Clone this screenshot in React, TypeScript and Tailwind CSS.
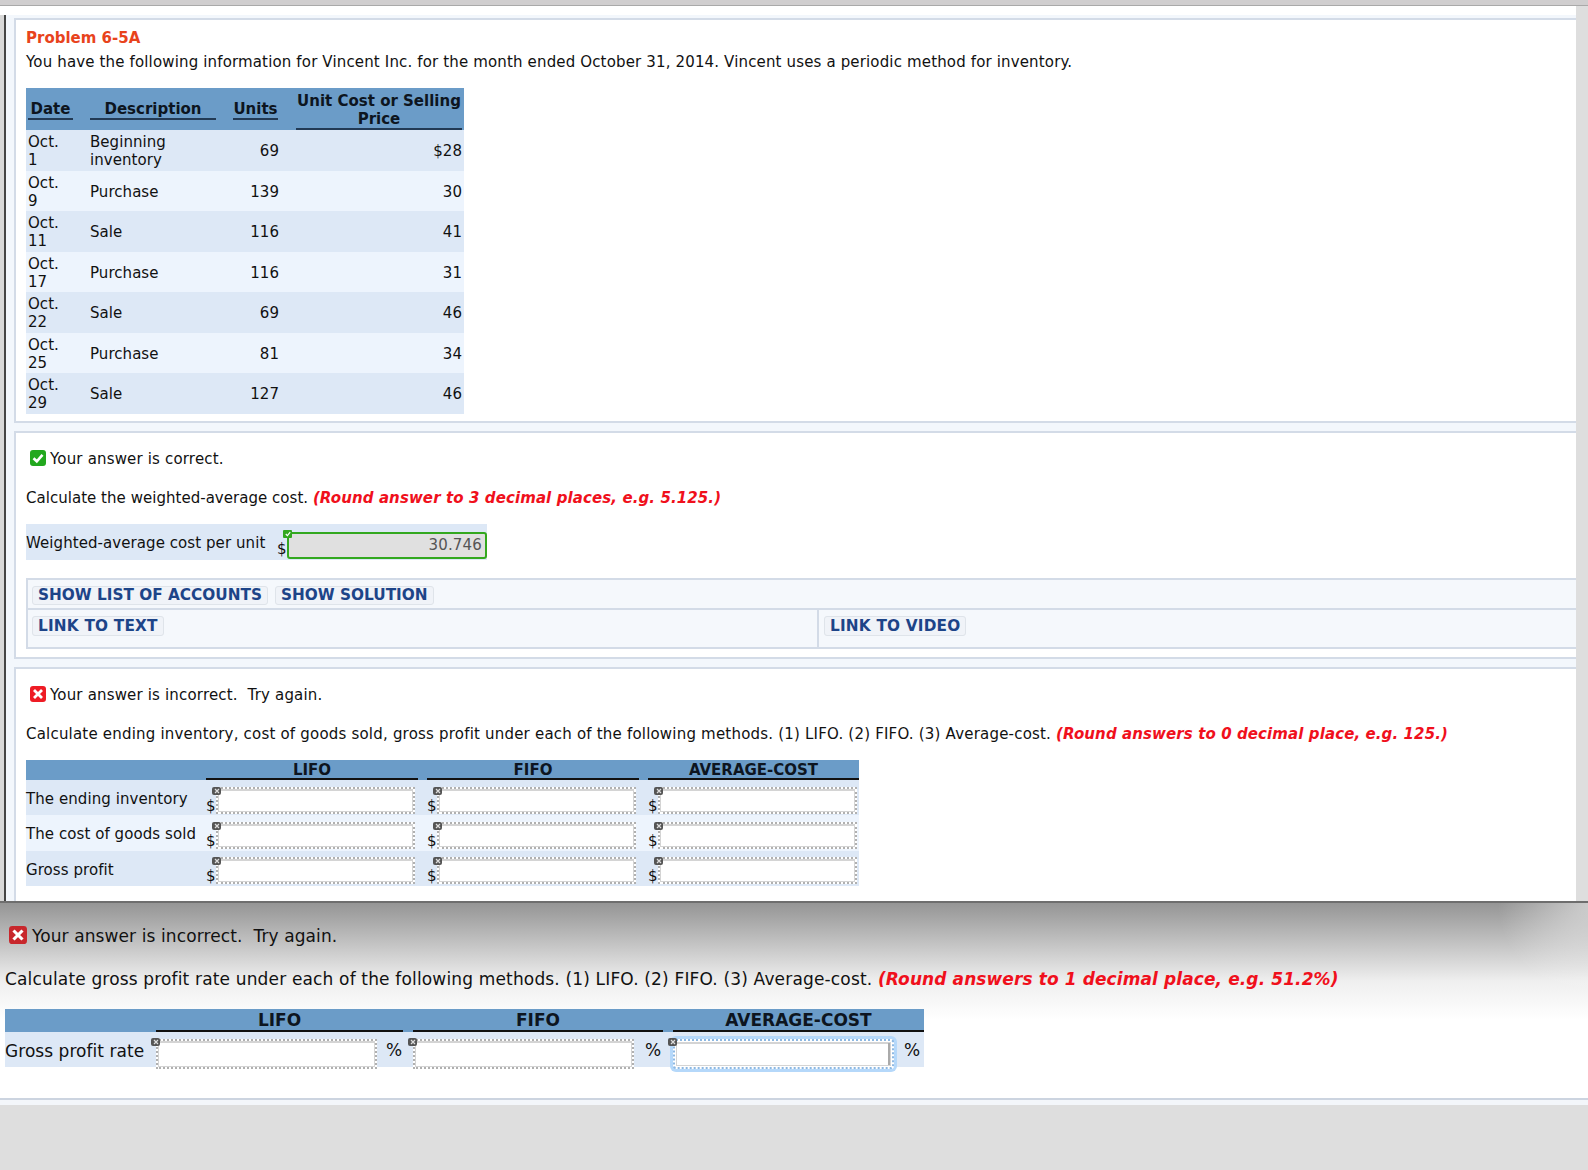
const inventoryRows = [
  { date: "Oct. 1", description: "Beginning inventory", units: "69", price: "$28" },
  { date: "Oct. 9", description: "Purchase", units: "139", price: "30" },
  { date: "Oct. 11", description: "Sale", units: "116", price: "41" },
  { date: "Oct. 17", description: "Purchase", units: "116", price: "31" },
  { date: "Oct. 22", description: "Sale", units: "69", price: "46" },
  { date: "Oct. 25", description: "Purchase", units: "81", price: "34" },
  { date: "Oct. 29", description: "Sale", units: "127", price: "46" },
];

const methodRows = ["The ending inventory", "The cost of goods sold", "Gross profit"];

const StatusIcon = ({ ok, dim }: { ok: boolean; dim?: boolean }) => (
  <svg viewBox="0 0 16 16" className={dim ? "h-[18px] w-[18px] shrink-0" : "h-4 w-4 shrink-0"}>
    <rect x="0" y="0" width="16" height="16" rx="3" fill={ok ? "#22a81e" : dim ? "#c8272c" : "#ee1c25"} />
    {ok ? (
      <path d="M3.5 8.2 L6.8 11.3 L12.5 4.8" stroke="#fff" strokeWidth="2.6" fill="none" />
    ) : (
      <path d="M4 4 L12 12 M12 4 L4 12" stroke="#fff" strokeWidth="2.8" fill="none" />
    )}
  </svg>
);

const ClearBadge = ({ className }: { className: string }) => (
  <span className={`absolute flex h-[8px] w-[9px] items-center justify-center rounded-[2px] bg-[#555] ${className}`}>
    <svg width="6" height="6" viewBox="0 0 6 6">
      <path d="M1 1 L5 5 M5 1 L1 5" stroke="#ddd" strokeWidth="1.2" />
    </svg>
  </span>
);

const DottedInput = ({ focused, badge }: { focused?: boolean; badge: string }) => (
  <div
    className={
      focused
        ? "relative h-full w-full rounded-[3px] border-2 border-dotted border-[#8db8e2] bg-white p-px shadow-[0_0_0_3px_#b5d8fa]"
        : "relative h-full w-full border-2 border-dotted border-[#b0b0b0] bg-white"
    }
  >
    <div className="h-full w-full border border-[#d4d4d4] border-t-2" />
    {focused && <div className="absolute bottom-[2px] right-[2px] top-[2px] w-[2px] bg-[#aaa]" />}
    <ClearBadge className={badge} />
  </div>
);

const ActionButton = ({ label, wide }: { label: string; wide?: boolean }) => (
  <span
    className={`rounded-[3px] border border-[#dfe4ea] bg-[#f0f3f8] px-[5px] text-[15.3px] font-bold leading-[17px] text-[#1d4488] ${
      wide ? "tracking-[0.2px]" : "tracking-normal"
    }`}
  >
    {label}
  </span>
);

const Panel = ({ className, children }: { className: string; children: React.ReactNode }) => (
  <section className={`ml-[8px] border-2 border-r-0 border-[#d3dbe7] bg-white pl-[10px] ${className}`}>{children}</section>
);

export default function App() {
  return (
    <div className="flex h-[1170px] w-[1588px] flex-col overflow-hidden bg-[#dedede] font-['DejaVu_Sans',sans-serif] text-[15px] tracking-[0.17px] text-[#111]">
      <div className="h-[6px] border-b border-[#a9a9a9] bg-[#d0cecf]" />
      <div className="h-[9px] w-[1576px] bg-white" />
      <div className="flex h-[886px] bg-[#dedede]">
        <div className="w-[4px] bg-[#d8d8d8]" />
        <div className="flex w-[1572px] flex-col gap-[8px] border-l-2 border-[#444] bg-[#f3f7fc] pt-[3px]">
          <Panel className="h-[405px]">
            <h1 className="mt-[9px] text-[15px] font-bold leading-[18px] tracking-normal text-[#e8431c]">Problem 6-5A</h1>
            <p className="mt-[6px] leading-[18px] tracking-[0.15px]">
              You have the following information for Vincent Inc. for the month ended October 31, 2014. Vincent uses a periodic method for inventory.
            </p>
            <table className="mt-[17px] w-[438px] table-fixed border-collapse tracking-[0.05px]">
              <thead>
                <tr className="h-[42px] bg-[#6b9cc8] font-bold tracking-normal text-[#0d1520]">
                  <th className="w-[60px]">
                    <div className="ml-[2px] mr-[13px] border-b-2 border-[#223a55] pt-[2px] leading-[18px]">Date</div>
                  </th>
                  <th className="w-[145px]">
                    <div className="ml-[4px] mr-[15px] border-b-2 border-[#223a55] pt-[2px] leading-[18px]">Description</div>
                  </th>
                  <th className="w-[49px]">
                    <div className="mx-[2px] border-b-2 border-[#223a55] pt-[2px] leading-[18px]">Units</div>
                  </th>
                  <th className="w-[184px] align-bottom">
                    <div className="ml-[16px] mr-[2px] border-b-2 border-[#223a55] leading-[18px]">Unit Cost or Selling Price</div>
                  </th>
                </tr>
              </thead>
              <tbody>
                {inventoryRows.map((row, i) => (
                  <tr key={row.date} className={i % 2 === 0 ? "h-[40.5px] bg-[#dde8f6]" : "h-[40.5px] bg-[#edf4fd]"}>
                    <td className="pl-[2px] pt-[2px] leading-[18px]">
                      <div className="w-[40px]">{row.date}</div>
                    </td>
                    <td className="pl-[4px] pr-[40px] pt-[2px] leading-[18px]">{row.description}</td>
                    <td className="pr-[1px] pt-[2px] text-right">{row.units}</td>
                    <td className="pr-[2px] pt-[2px] text-right">{row.price}</td>
                  </tr>
                ))}
              </tbody>
            </table>
          </Panel>

          <Panel className="h-[228px]">
            <div className="ml-[4px] mt-[16px] flex h-[18px] items-center gap-[4px] leading-[16px]">
              <StatusIcon ok />
              <span className="pt-[1px]">Your answer is correct.</span>
            </div>
            <p className="mt-[22px] leading-[18px] tracking-[0.03px]">
              Calculate the weighted-average cost.{" "}
              <em className="font-bold tracking-[0.1px] text-[#f0101c]">(Round answer to 3 decimal places, e.g. 5.125.)</em>
            </p>
            <div className="mt-[17px] flex h-[36px] w-[461px] items-center bg-[#dde8f6]">
              <span className="w-[251px] pt-[2px] leading-[18px] tracking-[0.07px]">Weighted-average cost per unit</span>
              <span className="mt-[14px] w-[10px]">$</span>
              <div className="relative mt-[7px] flex h-[27px] w-[200px] items-center justify-end rounded-[3px] border-2 border-[#33a81f] bg-[#e0e0e0] pr-[3px] text-[#555]">
                30.746
                <span className="absolute left-[-6px] top-[-4px] flex h-[8px] w-[9px] items-center justify-center rounded-[1px] bg-[#33a81f]">
                  <svg width="6" height="6" viewBox="0 0 6 6">
                    <path d="M0.8 3 L2.4 4.6 L5.2 1.2" stroke="#fff" strokeWidth="1.2" fill="none" />
                  </svg>
                </span>
              </div>
            </div>
            <div className="mt-[18px] border-2 border-r-0 border-[#d3dbe7] bg-[#f5f8fc]">
              <div className="flex h-[30px] items-center gap-[7px] border-b-2 border-[#d3dbe7] pl-[4px] pt-[2px]">
                <ActionButton label="SHOW LIST OF ACCOUNTS" />
                <ActionButton label="SHOW SOLUTION" />
              </div>
              <div className="flex h-[37px]">
                <div className="w-[791px] border-r-2 border-[#d3dbe7] pl-[4px] pt-[5px]">
                  <ActionButton label="LINK TO TEXT" wide />
                </div>
                <div className="pl-[5px] pt-[5px]">
                  <ActionButton label="LINK TO VIDEO" wide />
                </div>
              </div>
            </div>
          </Panel>

          <Panel className="flex-1 border-b-0">
            <div className="ml-[4px] mt-[16px] flex h-[18px] items-center gap-[4px] leading-[16px]">
              <StatusIcon ok={false} />
              <span className="whitespace-pre pt-[1px]">Your answer is incorrect.  Try again.</span>
            </div>
            <p className="mt-[22px] leading-[18px] tracking-[0.2px]">
              Calculate ending inventory, cost of goods sold, gross profit under each of the following methods. (1) LIFO. (2) FIFO. (3) Average-cost.{" "}
              <em className="font-bold tracking-[0.1px] text-[#f0101c]">(Round answers to 0 decimal place, e.g. 125.)</em>
            </p>
            <table className="mt-[17px] w-[833px] table-fixed border-collapse tracking-[0.07px]">
              <thead>
                <tr className="h-[20px] bg-[#6b9cc8] font-bold tracking-normal text-[#0d1520]">
                  <th className="w-[180px]" />
                  <th className="w-[221px] pr-[9px]">
                    <div className="border-b-2 border-[#111] pt-[3px] leading-[15px]">LIFO</div>
                  </th>
                  <th className="w-[221px] pr-[9px]">
                    <div className="border-b-2 border-[#111] pt-[3px] leading-[15px]">FIFO</div>
                  </th>
                  <th className="w-[211px]">
                    <div className="border-b-2 border-[#111] pt-[3px] leading-[15px]">AVERAGE-COST</div>
                  </th>
                </tr>
              </thead>
              <tbody>
                {methodRows.map((label, r) => (
                  <tr key={label} className={r % 2 === 0 ? "h-[35.3px] bg-[#dde8f6]" : "h-[35.3px] bg-[#edf4fd]"}>
                    <td className="whitespace-nowrap pt-[3px] leading-[18px]">{label}</td>
                    {[0, 1, 2].map((c) => (
                      <td key={c}>
                        <div className="flex items-end">
                          <span className="w-[10px] shrink-0 leading-[16px]">$</span>
                          <div className="mt-[5px] h-[27px] w-[199px]">
                            <DottedInput badge="left-[-6px] top-[-2px]" />
                          </div>
                        </div>
                      </td>
                    ))}
                  </tr>
                ))}
              </tbody>
            </table>
          </Panel>
        </div>
      </div>

      <div className="relative h-[199px] border-y-2 border-t-[#6e6e6e] border-b-[#ccd4e0] bg-linear-to-b from-[#959595] via-[#efefef] via-[40%] to-white to-[60%] pl-[5px] text-[17px] tracking-[0.16px]">
        <div className="absolute right-0 top-0 h-[90px] w-[120px] bg-[radial-gradient(circle_at_top_right,rgba(255,255,255,0.5),transparent_60%)]" />
        <div className="relative ml-[4px] mt-[22px] flex h-[20px] items-center gap-[5px] leading-[18px] tracking-[0.1px]">
          <StatusIcon ok={false} dim />
          <span className="whitespace-pre pt-[1px]">Your answer is incorrect.  Try again.</span>
        </div>
        <p className="relative mt-[24px] leading-[20px]">
          Calculate gross profit rate under each of the following methods. (1) LIFO. (2) FIFO. (3) Average-cost.{" "}
          <em className="font-bold tracking-[0.1px] text-[#f0101c]">(Round answers to 1 decimal place, e.g. 51.2%)</em>
        </p>
        <table className="relative mt-[20px] w-[919px] table-fixed border-collapse tracking-[0.05px]">
          <thead>
            <tr className="h-[23px] bg-[#6b9cc8] font-bold tracking-normal text-[#0d1520]">
              <th className="w-[151px]" />
              <th className="w-[257px] pr-[10px]">
                <div className="border-b-2 border-[#111] leading-[20px]">LIFO</div>
              </th>
              <th className="w-[260px] pr-[10px]">
                <div className="border-b-2 border-[#111] leading-[20px]">FIFO</div>
              </th>
              <th className="w-[251px]">
                <div className="border-b-2 border-[#111] leading-[20px]">AVERAGE-COST</div>
              </th>
            </tr>
          </thead>
          <tbody>
            <tr className="h-[35px] bg-[#dde8f6]">
              <td className="whitespace-nowrap pt-[2px] leading-[20px]">Gross profit rate</td>
              {[0, 1, 2].map((c) => (
                <td key={c}>
                  <div className={c === 0 ? "flex items-center gap-[9px]" : c === 1 ? "flex items-center gap-[11px]" : "flex items-center gap-[10px]"}>
                    <div className="-mb-[2px] mt-[7px] h-[30px] w-[221px] shrink-0">
                      <DottedInput focused={c === 2} badge="left-[-7px] top-[-3px]" />
                    </div>
                    <span className="pt-[2px]">%</span>
                  </div>
                </td>
              ))}
            </tr>
          </tbody>
        </table>
      </div>
      <div className="h-[5px] bg-[#f3f6fa]" />
    </div>
  );
}
